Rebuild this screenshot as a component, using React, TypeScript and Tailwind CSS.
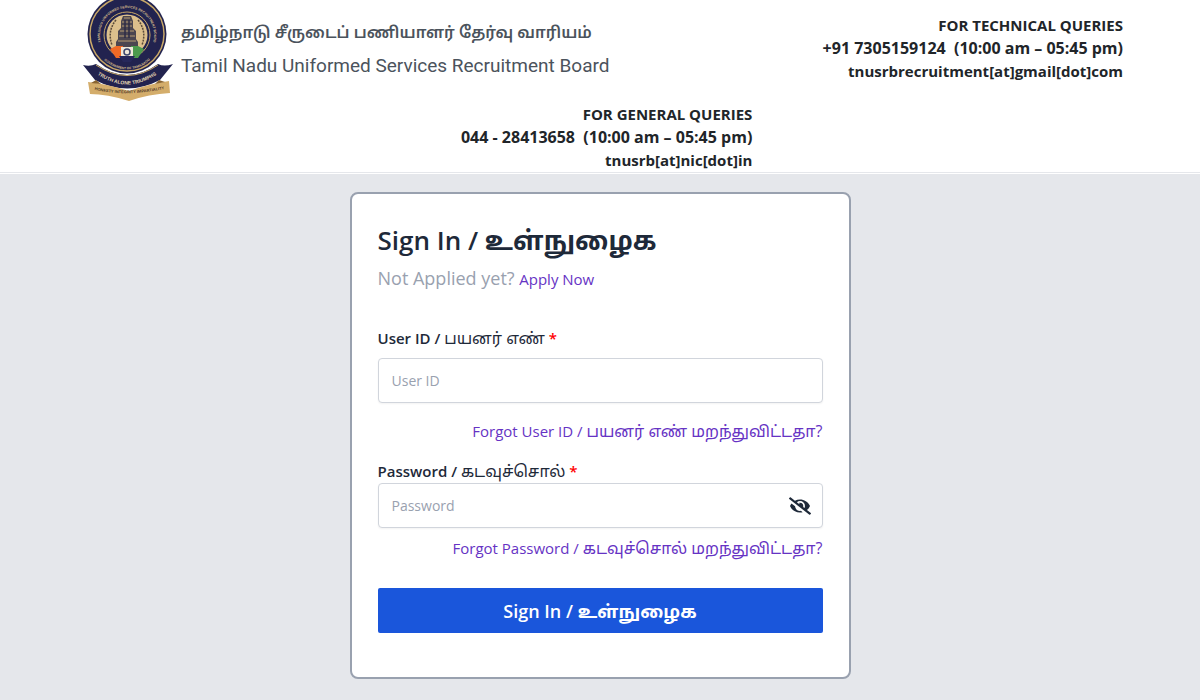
import { useState, type ReactNode } from "react";
import { FaEyeSlash } from "react-icons/fa";

function BoardLogo() {
  return (
    <svg viewBox="-2 0 96 102" className="h-[102px] w-24 shrink-0" role="img" aria-label="TNUSRB emblem">
      <defs>
        <path id="ring-top" d="M24.6 48.5 A27 27 0 1 1 71.4 48.5" />
        <path id="ring-bottom" d="M24 59 A33 33 0 0 0 72 59" />
        <path id="navy-band" d="M19 75 Q48 94 77 75" />
        <path id="gold-band" d="M12 89 Q48 98 89 88" />
      </defs>
      <circle cx="48" cy="34" r="39.5" fill="#22234f" />
      <circle cx="48" cy="34" r="37" fill="none" stroke="#c9a868" strokeWidth="1.5" />
      <circle cx="48" cy="35" r="23" fill="#22234f" stroke="#c9a868" strokeWidth="1" />
      <circle cx="48" cy="35" r="20.5" fill="#dcbf8c" />
      {/* wreath */}
      <path d="M37 20 Q28 31 33 45 M59 20 Q68 31 63 45" fill="none" stroke="#5a4a3a" strokeWidth="1.5" strokeDasharray="2 1" />
      {/* temple tower */}
      <path d="M44 16 h8 l2 5 v7 l3 3 v8 l2 3 v7 h-22 v-7 l2 -3 v-8 l3 -3 v-7z" fill="#4c4650" />
      <path d="M45 18 h6 M43 22 h10 M43 26 h10 M41 31 h14 M40 36 h16 M39 41 h18" stroke="#b99d72" strokeWidth="1" />
      <path d="M46 20 v18 M50 20 v18" stroke="#2c2b45" strokeWidth="1.5" />
      <path d="M37 46 L31 49 L37 58 H44 V46z" fill="#ef6a26" />
      <path d="M59 46 L65 49 L59 58 H52 V46z" fill="#4c9a4d" />
      <path d="M42 47 h12 v11 h-12z" fill="#eee8da" />
      <circle cx="48" cy="52" r="3" fill="none" stroke="#3c456b" strokeWidth="1.5" />
      <path d="M40 56 h16 l-4 6 h-8z" fill="#26285a" />
      <path d="M4 65 Q11 67 17 64 Q48 86 79 64 Q85 67 94 64 L81 80 Q48 97 16 80z" fill="#22234f" />
      <path d="M17 65 Q48 86 79 65" fill="none" stroke="#c9a868" strokeWidth="1" />
      <path d="M9 82 Q28 84 50 91 Q70 84 90 81 L91 93 Q70 94 50 101 Q28 94 11 94z" fill="#d4ad6b" />
      <path d="M17 80 L12 83 L22 84z M80 80 L86 82 L76 84z" fill="#8a6532" />
      <g fontFamily="'Liberation Sans', sans-serif" fontWeight="700">
        <text fill="#d5bd8d" fontSize="3.4">
          <textPath href="#ring-top" startOffset="50%" textAnchor="middle">TAMILNADU UNIFORMED SERVICES RECRUITMENT BOARD</textPath>
        </text>
        <text fill="#d5bd8d" fontSize="3.4">
          <textPath href="#ring-bottom" startOffset="50%" textAnchor="middle">GOVERNMENT OF TAMILNADU</textPath>
        </text>
        <text fill="#e6d9b5" fontSize="5">
          <textPath href="#navy-band" startOffset="50%" textAnchor="middle">TRUTH ALONE TRIUMPHS</textPath>
        </text>
        <text fill="#523b28" fontSize="4">
          <textPath href="#gold-band" startOffset="50%" textAnchor="middle">HONESTY  INTEGRITY  IMPARTIALITY</textPath>
        </text>
      </g>
    </svg>
  );
}

interface QueryContactProps {
  title: string;
  phone: string;
  email: string;
}

function QueryContact({ title, phone, email }: QueryContactProps) {
  return (
    <div className="text-right text-[15px] leading-[23px] font-bold text-[#212529]">
      <p>{title}</p>
      <p className="text-base leading-[23px]">{phone}&nbsp; (10:00 am – 05:45 pm)</p>
      <p>{email}</p>
    </div>
  );
}

function FieldLabel({ htmlFor, english, tamil }: { htmlFor: string; english: string; tamil: string }) {
  return (
    <label htmlFor={htmlFor} className="block text-[15px] leading-6 font-semibold text-gray-800">
      {english} / <span className="text-base font-normal">{tamil}</span> <span className="text-[#ff0000]">*</span>
    </label>
  );
}

function PurpleLink({ children }: { children: ReactNode }) {
  return (
    <a href="#" className="text-[15px] leading-6 text-[#6633c4] hover:underline">
      {children}
    </a>
  );
}

const inputClass =
  "h-[45px] w-full rounded border border-gray-300 bg-white px-[13px] text-sm text-gray-800 shadow-xs placeholder:text-gray-400 focus:outline-blue-600";

export default function App() {
  const [showPassword, setShowPassword] = useState(false);

  return (
    <div className="flex min-h-screen flex-col bg-gray-200 font-['Open_Sans','Noto_Sans_Tamil',sans-serif]">
      <header className="border-b border-gray-200 bg-white px-[77px]">
        <div className="flex justify-between">
          <div className="flex gap-2">
            <BoardLogo />
            <div className="pt-4 whitespace-nowrap text-[#4b535c]">
              <p className="text-base leading-8 font-semibold">தமிழ்நாடு சீருடைப் பணியாளர் தேர்வு வாரியம்</p>
              <p className="font-[Roboto] text-[19px] leading-9">Tamil Nadu Uniformed Services Recruitment Board</p>
            </div>
          </div>
          <div className="pt-3.5">
            <QueryContact
              title="FOR TECHNICAL QUERIES"
              phone="+91 7305159124"
              email="tnusrbrecruitment[at]gmail[dot]com"
            />
          </div>
        </div>
        <div className="w-2/3 pt-px pr-[22px]">
          <QueryContact title="FOR GENERAL QUERIES" phone="044 - 28413658" email="tnusrb[at]nic[dot]in" />
        </div>
      </header>

      <main className="flex justify-center border-t border-white px-4 pt-[18px] pb-12">
        <form
          className="w-full max-w-[501px] rounded-lg border-2 border-gray-400 bg-white px-[26px] pt-7 pb-11"
          onSubmit={(e) => e.preventDefault()}
        >
          <h1 className="text-[26px] leading-9 font-semibold text-gray-800">
            Sign In / <span className="font-bold">உள்நுழைக</span>
          </h1>
          <p className="mt-1 text-lg leading-8 text-gray-400">
            Not Applied yet? <PurpleLink>Apply Now</PurpleLink>
          </p>

          <div className="mt-8">
            <FieldLabel htmlFor="userId" english="User ID" tamil="பயனர் எண்" />
            <input id="userId" type="text" placeholder="User ID" className={`mt-2 ${inputClass}`} />
          </div>
          <div className="mt-4 text-right">
            <PurpleLink>
              Forgot User ID / <span className="text-base">பயனர் எண் மறந்துவிட்டதா?</span>
            </PurpleLink>
          </div>

          <div className="mt-4">
            <FieldLabel htmlFor="password" english="Password" tamil="கடவுச்சொல்" />
            <div className="relative">
              <input
                id="password"
                type={showPassword ? "text" : "password"}
                placeholder="Password"
                className={inputClass}
              />
              <button
                type="button"
                aria-label="Show password"
                className="absolute inset-y-0 right-3 flex items-center text-gray-800"
                onClick={() => setShowPassword(!showPassword)}
              >
                <FaEyeSlash size={22} />
              </button>
            </div>
          </div>
          <div className="mt-2 text-right">
            <PurpleLink>
              Forgot Password / <span className="text-base">கடவுச்சொல் மறந்துவிட்டதா?</span>
            </PurpleLink>
          </div>

          <button
            type="submit"
            className="mt-7 h-[45px] w-full rounded-xs bg-[#1a56db] text-lg font-semibold text-white hover:bg-blue-800"
          >
            Sign In / <span className="font-bold">உள்நுழைக</span>
          </button>
        </form>
      </main>
    </div>
  );
}
